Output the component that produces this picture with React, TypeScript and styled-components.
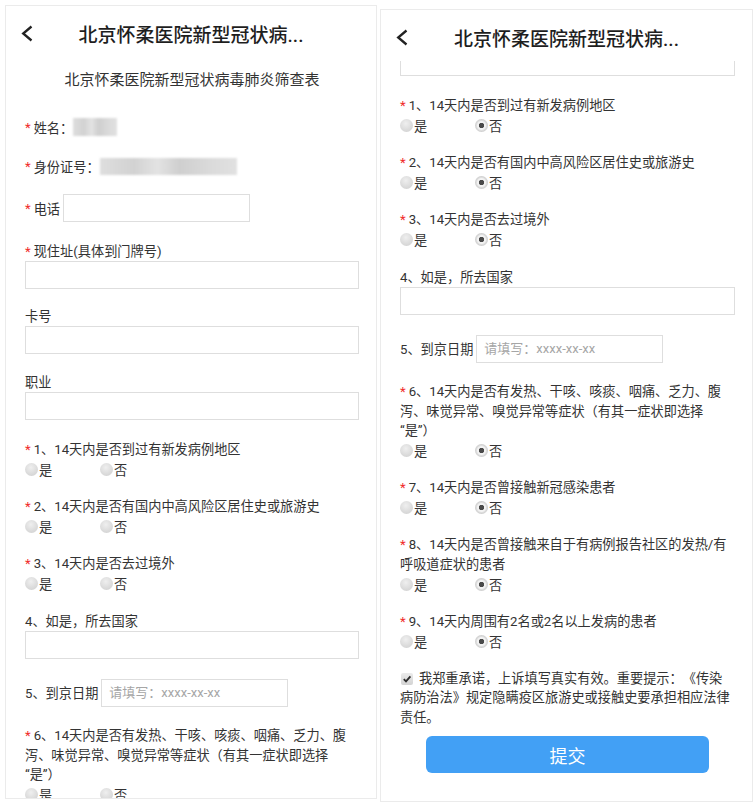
import React, { useLayoutEffect, useRef } from 'react';
import styled, { createGlobalStyle } from 'styled-components';

const GlobalStyle = createGlobalStyle`
  html, body { margin: 0; padding: 0; background: #fff; }
  body {
    font-family: Roboto, "Noto Sans CJK SC", "Noto Sans", sans-serif;
    color: #333;
    text-spacing-trim: space-all;
  }
  * { box-sizing: border-box; }
`;

const Page = styled.div`
  display: flex;
  align-items: flex-start;
  gap: 3px;
  padding: 5px 0 0 5px;
  width: 756px;
  height: 805px;
  overflow: hidden;
`;

const Phone = styled.section<{ $w: number; $h: number; $top: number }>`
  display: flex;
  flex-direction: column;
  flex-shrink: 0;
  width: ${p => p.$w}px;
  height: ${p => p.$h}px;
  margin-top: ${p => p.$top}px;
  border: 1px solid #ebebeb;
  background: #fff;
`;

const TitleBar = styled.header`
  display: grid;
  grid-template-columns: 44px 1fr 44px;
  align-items: center;
  flex-shrink: 0;
  height: 51px;
  padding-top: 4px;
`;

const BackButton = styled.button`
  display: flex;
  align-items: center;
  height: 20px;
  padding: 0 0 0 15px;
  border: none;
  background: none;
  cursor: pointer;
`;

const Title = styled.h1`
  margin: 0;
  font-size: 19px;
  font-weight: 500;
  color: #1e1e1e;
  text-align: center;
  white-space: nowrap;
`;

const Body = styled.div`
  flex: 1;
  overflow: hidden;
`;

const Form = styled.form`
  display: flex;
  flex-direction: column;
  padding: 13px 17px 28px 19px;
  font-size: 13.2px;
`;

const Subtitle = styled.h2`
  margin: 0;
  font-size: 15px;
  font-weight: 400;
  line-height: 20px;
  color: #333;
  text-align: center;
`;

const Row = styled.div<{ $mt: number; $h: number }>`
  display: flex;
  align-items: center;
  height: ${p => p.$h}px;
  margin-top: ${p => p.$mt}px;
  white-space: nowrap;
`;

const Block = styled.div<{ $mt: number }>`
  margin-top: ${p => p.$mt}px;
`;

const Label = styled.div<{ $lh: number }>`
  padding-right: 5px;
  line-height: ${p => p.$lh}px;
  color: #333;
`;

const Star = styled.span`
  color: #f02b2b;
  margin-right: 3px;
`;

const Masked = styled.span<{ $w: number; $h: number }>`
  display: inline-block;
  width: ${p => p.$w}px;
  height: ${p => p.$h}px;
  background: linear-gradient(90deg, #dedede, #d2d2d2 25%, #e3e3e3 42%, #cfcfcf 58%, #dadada 80%, #e1e1e1);
  filter: blur(1px);
`;

const Input = styled.input<{ $w?: number }>`
  display: block;
  width: ${p => (p.$w ? `${p.$w}px` : '100%')};
  height: 28px;
  margin: 0;
  padding: 0 7px;
  border: 1px solid #dedede;
  border-radius: 0;
  outline: none;
  background: #fff;
  font: inherit;
  font-size: 13px;
  color: #333;
  &::placeholder { color: #a6a6a6; }
`;

const InlineInput = styled(Input)`
  margin-left: 3px;
`;

const Options = styled.div`
  display: flex;
  align-items: center;
  height: 20px;
`;

const Option = styled.label`
  display: inline-flex;
  align-items: center;
  width: 75px;
  color: #333;
`;

const RadioDot = styled.span<{ $checked: boolean }>`
  width: 13px;
  height: 13px;
  margin-right: 1px;
  border-radius: 50%;
  background: ${p =>
    p.$checked
      ? 'radial-gradient(circle, #4a4a4a 0 2.4px, #f3f3f3 3px 4px, #dedede 5px, #cbcbcb 6.5px)'
      : 'radial-gradient(circle at 45% 35%, #efefef, #dcdcdc 55%, #cdcdcd)'};
`;

const Pledge = styled.p`
  margin: 17.5px 0 0;
  padding-right: 5px;
  line-height: 19.5px;
  color: #333;
`;

const CheckBox = styled.span`
  display: inline-flex;
  align-items: center;
  justify-content: center;
  width: 12px;
  height: 12px;
  margin: 0 6px 0 1px;
  vertical-align: -1px;
  border-radius: 2px;
  background: linear-gradient(#ebebeb, #d3d3d3);
`;

const SubmitButton = styled.button`
  display: block;
  width: 283px;
  height: 37px;
  margin: 9px auto 0;
  border: none;
  border-radius: 6px;
  background: #42a0f5;
  color: #fff;
  font-family: inherit;
  font-size: 18px;
`;

type Question = {
  id: number;
  text: React.ReactNode;
  required?: boolean;
  kind: 'radio' | 'text' | 'date';
};

const QUESTIONS: Question[] = [
  { id: 1, text: '1、14天内是否到过有新发病例地区', required: true, kind: 'radio' },
  { id: 2, text: '2、14天内是否有国内中高风险区居住史或旅游史', required: true, kind: 'radio' },
  { id: 3, text: '3、14天内是否去过境外', required: true, kind: 'radio' },
  { id: 4, text: '4、如是，所去国家', kind: 'text' },
  { id: 5, text: '5、到京日期', kind: 'date' },
  {
    id: 6,
    text: (
      <>
        6、14天内是否有发热、干咳、咳痰、咽痛、乏力、腹泻、味觉异常、嗅觉异常等症状（有其一症状即选择<wbr />“是”）
      </>
    ),
    required: true,
    kind: 'radio',
  },
  { id: 7, text: '7、14天内是否曾接触新冠感染患者', required: true, kind: 'radio' },
  { id: 8, text: '8、14天内是否曾接触来自于有病例报告社区的发热/有呼吸道症状的患者', required: true, kind: 'radio' },
  { id: 9, text: '9、14天内周围有2名或2名以上发病的患者', required: true, kind: 'radio' },
];

const BackIcon = () => (
  <svg width="12" height="17" viewBox="0 0 12 17">
    <polyline points="10.5,1.5 2.2,8.5 10.5,15.5" fill="none" stroke="#222" strokeWidth="2.3" />
  </svg>
);

const CheckIcon = () => (
  <svg width="10" height="10" viewBox="0 0 10 10">
    <path d="M1.8 5.2 L4 7.4 L8.4 2.4" fill="none" stroke="#2c2c2c" strokeWidth="1.8" />
  </svg>
);

const Radio = ({ answered }: { answered: boolean }) => (
  <Options>
    <Option>
      <RadioDot $checked={false} />是
    </Option>
    <Option>
      <RadioDot $checked={answered} />否
    </Option>
  </Options>
);

const ScreeningForm = ({ answered }: { answered: boolean }) => (
  <Form onSubmit={e => e.preventDefault()}>
    <Subtitle>北京怀柔医院新型冠状病毒肺炎筛查表</Subtitle>
    <Row $mt={27} $h={20}>
      <Star>*</Star>姓名：<Masked $w={44} $h={18} />
    </Row>
    <Row $mt={19} $h={20}>
      <Star>*</Star>身份证号：<Masked $w={137} $h={17} />
    </Row>
    <Row $mt={18} $h={28}>
      <Star>*</Star>电话<InlineInput $w={187} />
    </Row>
    <Block $mt={21}>
      <Label $lh={18}>
        <Star>*</Star>现住址(具体到门牌号)
      </Label>
      <Input />
    </Block>
    <Block $mt={19}>
      <Label $lh={18}>卡号</Label>
      <Input />
    </Block>
    <Block $mt={20}>
      <Label $lh={18}>职业</Label>
      <Input />
    </Block>
    {QUESTIONS.map((q, i) => {
      const prev = QUESTIONS[i - 1];
      const mt = i === 0 ? 20 : q.kind === 'radio' && prev.kind === 'radio' ? 17.5 : 19.5;
      if (q.kind === 'date') {
        return (
          <Row key={q.id} $mt={mt} $h={28}>
            {q.text}
            <InlineInput $w={187} placeholder="请填写：xxxx-xx-xx" />
          </Row>
        );
      }
      return (
        <Block key={q.id} $mt={mt}>
          <Label $lh={q.kind === 'radio' ? 19.5 : 18}>
            {q.required && <Star>*</Star>}
            {q.text}
          </Label>
          {q.kind === 'radio' ? <Radio answered={answered} /> : <Input />}
        </Block>
      );
    })}
    <Pledge>
      <CheckBox>
        <CheckIcon />
      </CheckBox>
      我郑重承诺，上诉填写真实有效。重要提示：《传染病防治法》规定隐瞒疫区旅游史或接触史要承担相应法律责任。
    </Pledge>
    <SubmitButton type="submit">提交</SubmitButton>
  </Form>
);

const Screen = ({ w, h, top, scroll, answered }: { w: number; h: number; top: number; scroll: number; answered: boolean }) => {
  const bodyRef = useRef<HTMLDivElement>(null);
  useLayoutEffect(() => {
    if (bodyRef.current) bodyRef.current.scrollTop = scroll;
  }, [scroll]);
  return (
    <Phone $w={w} $h={h} $top={top}>
      <TitleBar>
        <BackButton type="button">
          <BackIcon />
        </BackButton>
        <Title>北京怀柔医院新型冠状病...</Title>
        <span />
      </TitleBar>
      <Body ref={bodyRef}>
        <ScreeningForm answered={answered} />
      </Body>
    </Phone>
  );
};

const App = () => (
  <>
    <GlobalStyle />
    <Page>
      <Screen w={372} h={794} top={0} scroll={0} answered={false} />
      <Screen w={373} h={793} top={4} scroll={348} answered />
    </Page>
  </>
);

export default App;
